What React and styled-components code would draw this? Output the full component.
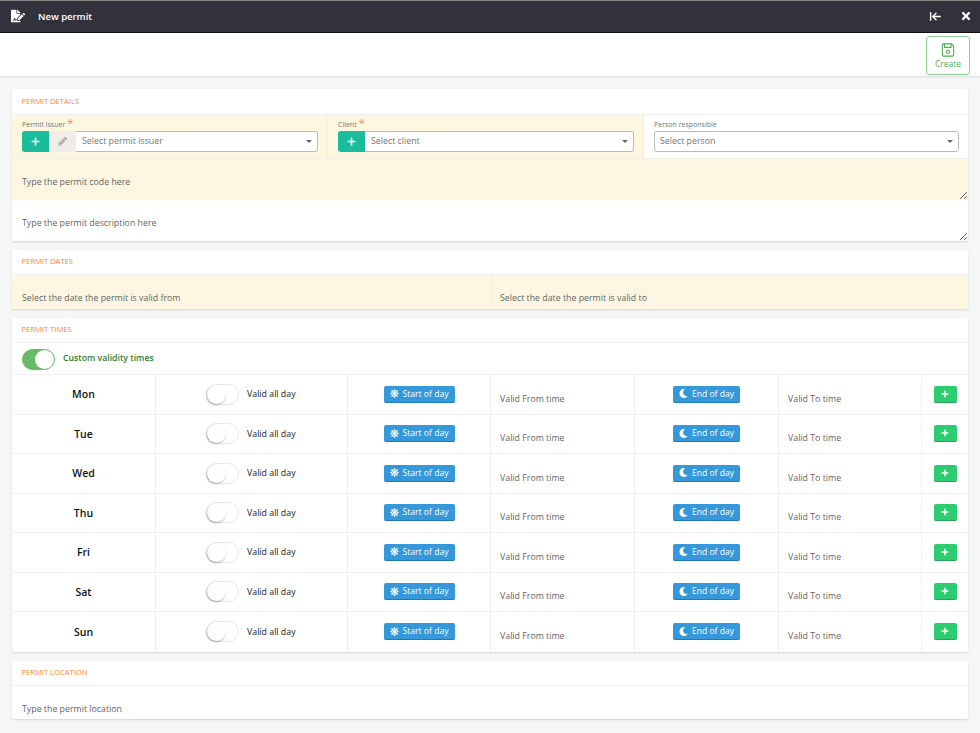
import styled, { createGlobalStyle } from "styled-components";
import { FaFileSignature, FaPencilAlt, FaPlus, FaMoon, FaTimes, FaSun } from "react-icons/fa";
import { ArrowLeftToLine } from "lucide-react";

const days = ["Mon", "Tue", "Wed", "Thu", "Fri", "Sat", "Sun"];

export default function App() {
  return (
    <>
      <GlobalStyle />
      <TitleBar>
        <TitleLeft>
          <FaFileSignature size={14} color="#fff" />
          <TitleText>New permit</TitleText>
        </TitleLeft>
        <TitleRight>
          <ArrowLeftToLine size={13} strokeWidth={2.6} color="#fff" />
          <FaTimes size={12} color="#fff" />
        </TitleRight>
      </TitleBar>
      <Toolbar>
        <CreateBtn>
          <svg width="14" height="14" viewBox="0 0 16 16" fill="none" stroke="#4caf50" strokeWidth="1.2">
            <path d="M2 1h10l2.5 2.5V13.5a1.5 1.5 0 0 1-1.5 1.5H3a1.5 1.5 0 0 1-1.5-1.5V2.5A1.5 1.5 0 0 1 2 1z" />
            <path d="M4 1v4h7.5V1" />
            <circle cx="8" cy="10" r="2" />
          </svg>
          Create
        </CreateBtn>
      </Toolbar>
      <Page>
        <Card>
          <CardHeader>Permit details</CardHeader>
          <SelectRow>
            <SelectCell $required>
              <FieldLabel>Permit Issuer<Star>*</Star></FieldLabel>
              <InputGroup>
                <AddBtn><FaPlus size={9} /></AddBtn>
                <EditBtn><FaPencilAlt size={9} /></EditBtn>
                <SelectBox>Select permit issuer</SelectBox>
              </InputGroup>
            </SelectCell>
            <SelectCell $required>
              <FieldLabel>Client<Star>*</Star></FieldLabel>
              <InputGroup>
                <AddBtn><FaPlus size={9} /></AddBtn>
                <SelectBox>Select client</SelectBox>
              </InputGroup>
            </SelectCell>
            <SelectCell>
              <FieldLabel>Person responsible</FieldLabel>
              <InputGroup>
                <SelectBox $alone>Select person</SelectBox>
              </InputGroup>
            </SelectCell>
          </SelectRow>
          <TextBlock $required placeholder="Type the permit code here" />
          <TextBlock placeholder="Type the permit description here" />
        </Card>

        <Card>
          <CardHeader>Permit dates</CardHeader>
          <DatesRow>
            <DateCell>Select the date the permit is valid from</DateCell>
            <DateCell>Select the date the permit is valid to</DateCell>
          </DatesRow>
        </Card>

        <Card>
          <CardHeader>Permit times</CardHeader>
          <CustomRow>
            <Toggle $on />
            <CustomLabel>Custom validity times</CustomLabel>
          </CustomRow>
          {days.map((d) => (
            <DayRow key={d}>
              <DayName>{d}</DayName>
              <AllDayCell>
                <Toggle />
                <AllDayLabel>Valid all day</AllDayLabel>
              </AllDayCell>
              <BtnCell>
                <BlueBtn><FaSun size={9} />Start of day</BlueBtn>
              </BtnCell>
              <TimeCell>Valid From time</TimeCell>
              <BtnCell>
                <BlueBtn><FaMoon size={9} />End of day</BlueBtn>
              </BtnCell>
              <TimeCell>Valid To time</TimeCell>
              <BtnCell>
                <GreenBtn><FaPlus size={8} /></GreenBtn>
              </BtnCell>
            </DayRow>
          ))}
        </Card>

        <Card>
          <CardHeader>Permit location</CardHeader>
          <LocationRow>Type the permit location</LocationRow>
        </Card>
      </Page>
    </>
  );
}

const GlobalStyle = createGlobalStyle`
  html, body {
    margin: 0;
    padding: 0;
    height: 733px;
    overflow: hidden;
    background: #f5f7f7;
    font-family: "Open Sans", "Liberation Sans", sans-serif;
  }
  * { box-sizing: border-box; }
`;

const TitleBar = styled.div`
  height: 33px;
  background: #32323c;
  border-top: 1px solid #8a8a8a;
  border-bottom: 1px solid #111;
  display: flex;
  align-items: center;
  justify-content: space-between;
  padding: 0 8px 1px 11px;
`;
const TitleLeft = styled.div`
  display: flex;
  align-items: center;
  gap: 13px;
`;
const TitleText = styled.span`
  color: #fff;
  font-size: 9.5px;
  font-weight: 600;
`;
const TitleRight = styled.div`
  display: flex;
  align-items: center;
  gap: 18px;
`;
const Toolbar = styled.div`
  height: 43px;
  background: #fff;
  box-shadow: 0 1px 2px rgba(0, 0, 0, 0.1);
  display: flex;
  justify-content: flex-end;
  padding: 3px 10px 0 0;
`;
const CreateBtn = styled.div`
  width: 44px;
  height: 39px;
  border: 1px solid #8fd094;
  border-radius: 3px;
  color: #4caf50;
  font-size: 8.5px;
  font-weight: 500;
  display: flex;
  flex-direction: column;
  align-items: center;
  justify-content: center;
  gap: 1px;
`;
const Page = styled.div`
  padding: 13px 12px 0;
  display: flex;
  flex-direction: column;
  gap: 9px;
`;
const Card = styled.section`
  background: #fff;
  border-radius: 2px;
  box-shadow: 0 1px 2px rgba(0, 0, 0, 0.14);
  overflow: hidden;
`;
const CardHeader = styled.h3`
  margin: 0;
  height: 25.5px;
  padding: 0 9.5px 1px;
  display: flex;
  align-items: center;
  font-size: 7.6px;
  font-weight: 500;
  text-transform: uppercase;
  color: #f58634;
  border-bottom: 1px solid #f0f0f0;
`;
const SelectRow = styled.div`
  display: grid;
  grid-template-columns: 316px 316px 1fr;
  height: 44px;
  border-bottom: 1px solid #f1eee2;
`;
const SelectCell = styled.div`
  background: ${(p) => (p.$required ? "#fdf6e0" : "#fff")};
  border-right: 1px solid #f1eee2;
  padding: 4.5px 9px 0 10px;
  &:last-child {
    border-right: none;
    padding-right: 9px;
  }
`;
const FieldLabel = styled.div`
  height: 12px;
  font-size: 7px;
  line-height: 12px;
  color: #777;
`;
const Star = styled.span`
  color: #f58634;
  font-size: 11px;
  line-height: 8px;
  margin-left: 2px;
`;
const InputGroup = styled.div`
  display: flex;
  height: 21px;
`;
const AddBtn = styled.div`
  width: 27px;
  background: #1abc9c;
  color: #fff;
  border-radius: 3px 0 0 3px;
  display: flex;
  align-items: center;
  justify-content: center;
`;
const EditBtn = styled.div`
  width: 27px;
  background: #f0ede6;
  color: #aaa;
  display: flex;
  align-items: center;
  justify-content: center;
`;
const SelectBox = styled.div`
  flex: 1;
  position: relative;
  background: #fff;
  border: 1px solid #bbb;
  border-left: ${(p) => (p.$alone ? "1px solid #bbb" : "none")};
  border-radius: ${(p) => (p.$alone ? "3px" : "0 3px 3px 0")};
  padding-left: ${(p) => (p.$alone ? "5px" : "6px")};
  font-size: 8.8px;
  line-height: 19px;
  color: #777;
  &::after {
    content: "";
    position: absolute;
    right: 5px;
    top: 8px;
    border: 3px solid transparent;
    border-top: 3px solid #666;
  }
`;
const TextBlock = styled.textarea`
  display: block;
  width: 100%;
  height: 41px;
  margin: 0;
  border: none;
  outline: none;
  resize: vertical;
  padding: 17.5px 10px 0;
  font-family: inherit;
  font-size: 8.8px;
  background: ${(p) => (p.$required ? "#fdf6e0" : "#fff")};
  &::placeholder {
    color: #666;
    opacity: 1;
  }
`;
const DatesRow = styled.div`
  display: grid;
  grid-template-columns: 479px 1fr;
  height: 33.5px;
  background: #fdf6e0;
`;
const DateCell = styled.div`
  padding: 17px 10px 0;
  font-size: 8.8px;
  line-height: 12px;
  color: #666;
  & + & {
    border-left: 1px solid #f1eee2;
    padding-left: 8px;
  }
`;
const CustomRow = styled.div`
  height: 32px;
  padding: 5.5px 10px 0;
  display: flex;
  align-items: flex-start;
  gap: 8px;
  border-bottom: 1px solid #f0f0f0;
`;
const CustomLabel = styled.span`
  margin-top: 3.5px;
  font-size: 8.7px;
  font-weight: 600;
  color: #2e7d32;
`;
const Toggle = styled.span`
  display: block;
  position: relative;
  width: 33px;
  height: 21px;
  flex: none;
  border-radius: 11px;
  background: ${(p) => (p.$on ? "#66bb6a" : "#fff")};
  border: 1px solid ${(p) => (p.$on ? "#66bb6a" : "#e6e6e6")};
  &::after {
    content: "";
    position: absolute;
    top: 0;
    ${(p) => (p.$on ? "right: 0;" : "left: 0;")}
    width: 19px;
    height: 19px;
    border-radius: 50%;
    background: #fff;
    box-shadow: ${(p) => (p.$on ? "none" : "-0.5px 1px 2px rgba(0,0,0,0.35)")};
  }
`;
const DayRow = styled.div`
  display: grid;
  grid-template-columns: 143px 192px 143px 144px 144px 143px 1fr;
  height: 39.5px;
  border-bottom: 1px solid #f0f0f0;
  &:last-child { border-bottom: none; }
  & > * + * { border-left: 1px solid #f0f0f0; }
`;
const DayName = styled.div`
  display: flex;
  align-items: center;
  justify-content: center;
  font-size: 10.5px;
  font-weight: 600;
  color: #111;
`;
const AllDayCell = styled.div`
  display: flex;
  align-items: center;
  padding-left: 50px;
  gap: 8px;
`;
const AllDayLabel = styled.span`
  font-size: 8.8px;
  color: #222;
`;
const BtnCell = styled.div`
  display: flex;
  align-items: center;
  justify-content: center;
`;
const BlueBtn = styled.div`
  display: flex;
  align-items: center;
  justify-content: center;
  gap: 4px;
  height: 17px;
  padding: 0 6px;
  background: #3498db;
  border-bottom: 1px solid #1f7ab8;
  border-radius: 2px;
  color: #fff;
  font-size: 8.6px;
  font-weight: 500;
  white-space: nowrap;
`;
const GreenBtn = styled.div`
  width: 23px;
  height: 17px;
  display: flex;
  align-items: center;
  justify-content: center;
  background: #2ecc71;
  border-bottom: 1px solid #25a55b;
  border-radius: 2px;
  color: #fff;
`;
const TimeCell = styled.div`
  padding: 17.5px 9px 0;
  font-size: 8.8px;
  line-height: 12px;
  color: #666;
`;
const LocationRow = styled.div`
  height: 33px;
  padding: 17px 10px 0;
  font-size: 8.8px;
  line-height: 12px;
  color: #666;
`;
